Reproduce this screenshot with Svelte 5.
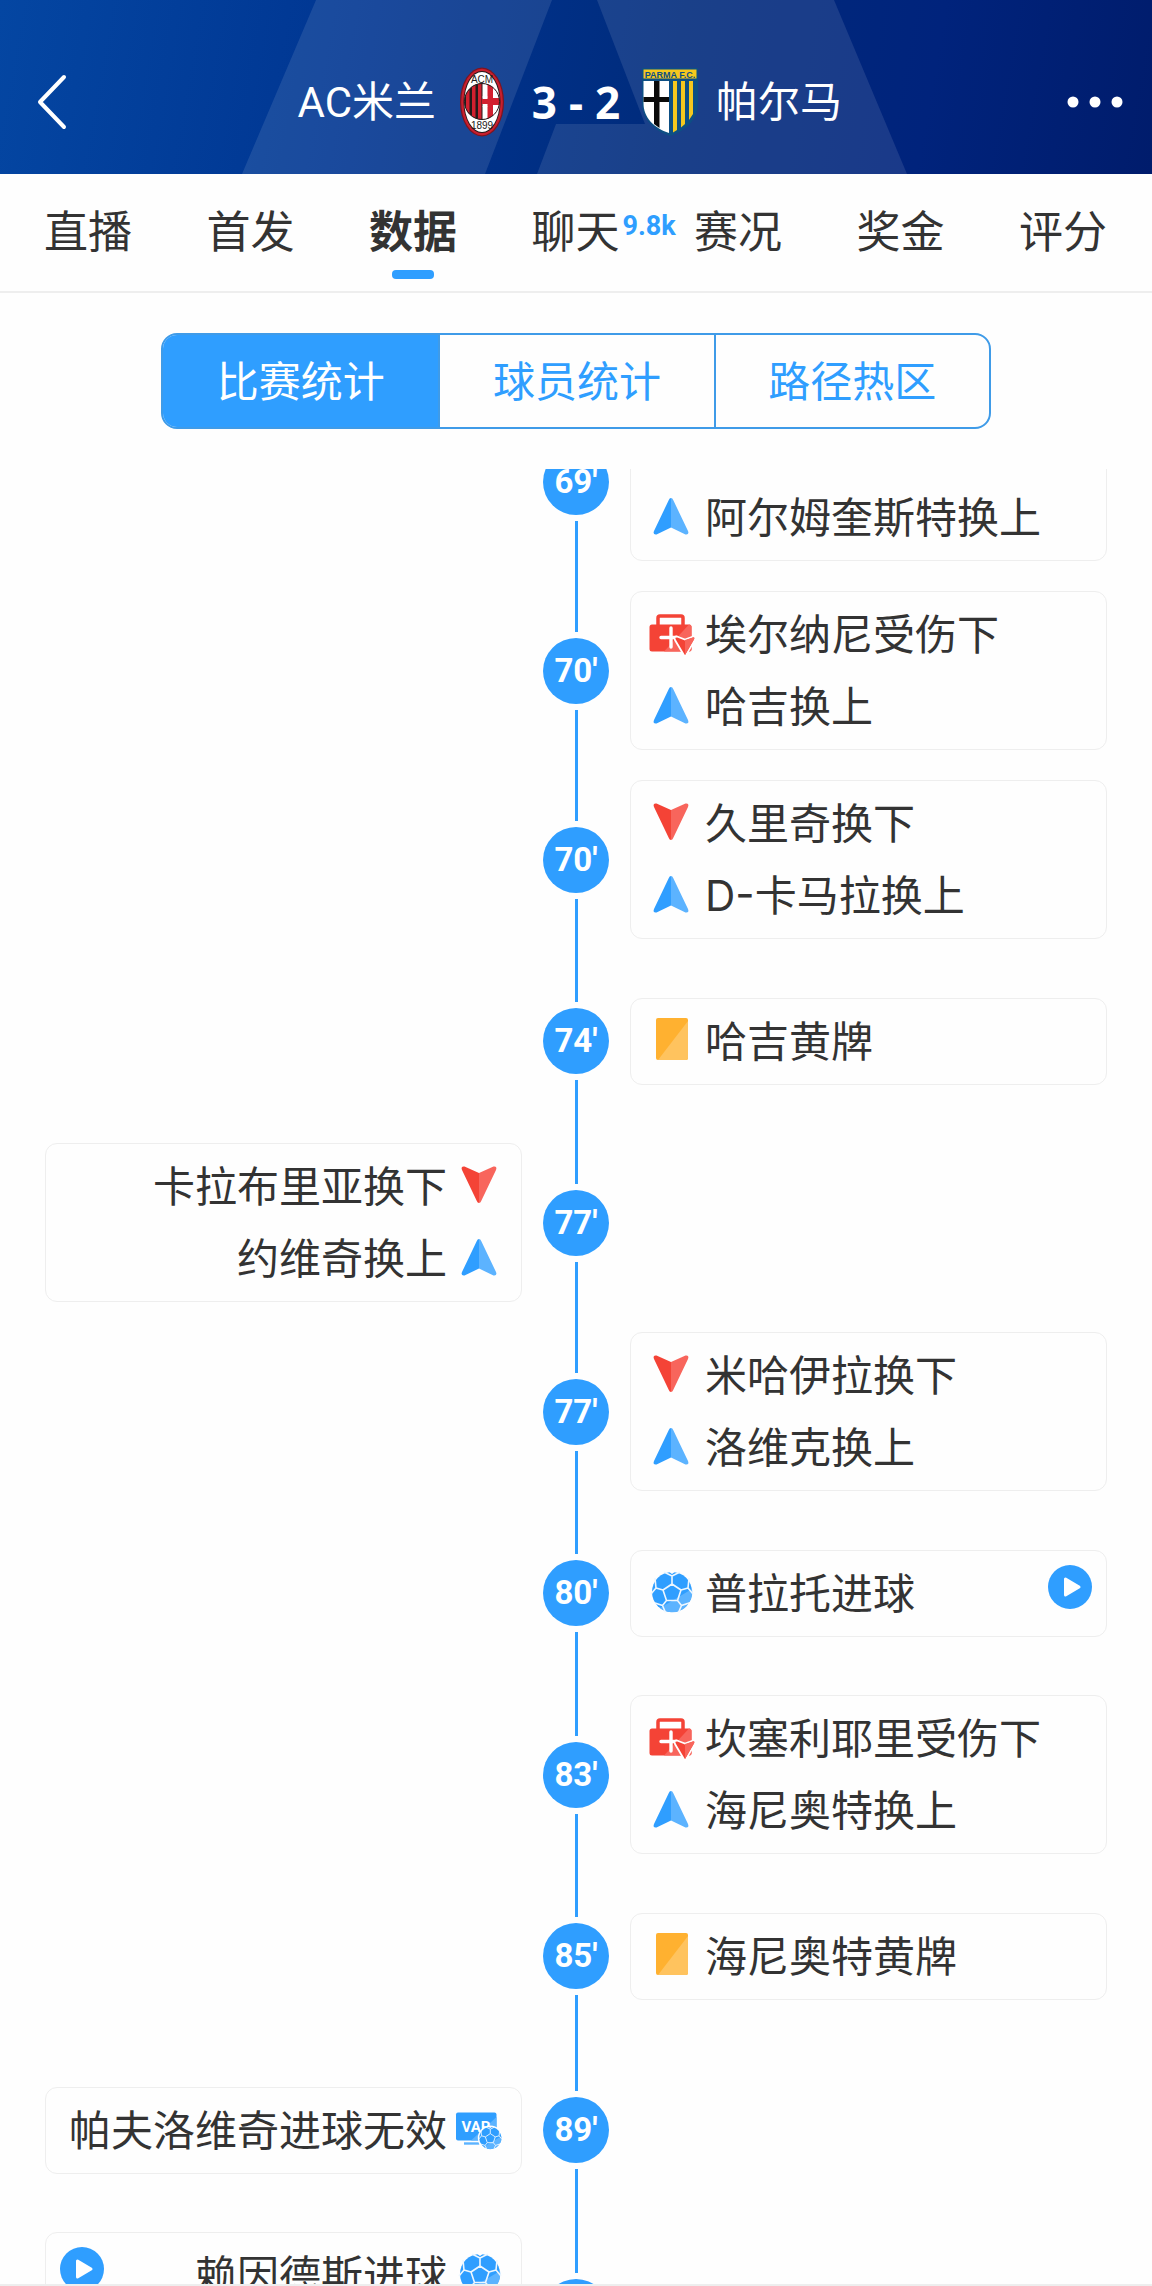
<script>
  const tabs = [
    { name: '直播' },
    { name: '首发' },
    { name: '数据', active: true },
    { name: '聊天', badge: '9.8k' },
    { name: '赛况' },
    { name: '奖金' },
    { name: '评分' }
  ];

  const views = ['比赛统计', '球员统计', '路径热区'];
  let view = $state(0);

  const rows = [
    { minute: '69′', side: 'right', tall: true, align: 'end', events: [['up', '阿尔姆奎斯特换上']] },
    { minute: '70′', side: 'right', events: [['injury', '埃尔纳尼受伤下'], ['up', '哈吉换上']] },
    { minute: '70′', side: 'right', events: [['down', '久里奇换下'], ['up', 'D-卡马拉换上']] },
    { minute: '74′', side: 'right', events: [['yellow', '哈吉黄牌']] },
    { minute: '77′', side: 'left', events: [['down', '卡拉布里亚换下'], ['up', '约维奇换上']] },
    { minute: '77′', side: 'right', events: [['down', '米哈伊拉换下'], ['up', '洛维克换上']] },
    { minute: '80′', side: 'right', video: true, events: [['goal', '普拉托进球']] },
    { minute: '83′', side: 'right', events: [['injury', '坎塞利耶里受伤下'], ['up', '海尼奥特换上']] },
    { minute: '85′', side: 'right', events: [['yellow', '海尼奥特黄牌']] },
    { minute: '89′', side: 'left', events: [['var', '帕夫洛维奇进球无效']] },
    { minute: '', side: 'left', tall: true, video: true, events: [['goal', '赖因德斯进球']] }
  ];
</script>

{#snippet ball()}
  <circle cx="27" cy="25" r="20" fill="#2f9eff" />
  <path d="M47 22A20 20 0 0 1 15 41Z" fill="#5cb3ff" />
  <path
    d="M27 17l9 6-3.500 10.500h-11L18 23zM27 17V9M27 9l-8-4M27 9l8-4M36 23l7-2M43 21l1-10M43 21l5 6M32.500 33.500l4 5M36.500 38.500l9-3M36.500 38.500l-3 7M21.500 33.500l-4 5M17.500 38.500l-9-3M17.500 38.500l3 7M18 23l-7-2M11 21l-1-10M11 21l-5 6"
    fill="none"
    stroke="#eef7ff"
    stroke-width="1.600"
    stroke-linejoin="round"
  />
  <path d="M23 4h8l-4 3zM8 33l5 8-6-3zM46 33l-5 8 6-3z" fill="#fff" />
{/snippet}

{#snippet icon(kind)}
  <svg class="icon" viewBox="0 0 52 52" aria-hidden="true">
    {#if kind === 'up'}
      <path d="M26 7q1.500 0 2.200 2L43 40q1.500 4-2.500 3.500L26 36.500Z" fill="#5cb3ff" />
      <path d="M26 7q-1.500 0-2.200 2L9 40q-1.500 4 2.500 3.500L26 36.500Z" fill="#2f9eff" />
    {:else if kind === 'down'}
      <path d="M26 43q1.500 0 2.200-2L43 10q1.500-4-2.500-3.500L26 13Z" fill="#f8655c" />
      <path d="M26 43q-1.500 0-2.200-2L9 10q-1.500-4 2.500-3.500L26 13Z" fill="#f44336" />
    {:else if kind === 'yellow'}
      <rect x="11" y="3" width="32" height="42" rx="2" fill="#ffb130" />
      <path d="M43 6v37q0 2-2 2H13Z" fill="#ffc35e" />
    {:else if kind === 'injury'}
      <path d="M13 17V10q0-2 2-2h21q2 0 2 2v7" fill="none" stroke="#f44336" stroke-width="3.500" />
      <rect x="4.500" y="16.500" width="42" height="27" rx="2.500" fill="#f44336" />
      <path d="M44 16.500q2.500 0 2.500 2.500v22q0 2.500-2.500 2.500H19Z" fill="#f8655c" />
      <path d="M16 29.500h16M26 20v19" stroke="#fff" stroke-width="3.400" stroke-linecap="round" />
      <path d="M32 28.500l8 3 8-3q3-.5 2 3L40 49 30 32q-1.500-3.500 2-3.500Z" fill="#f44336" stroke="#fff" stroke-width="1.800" />
      <path d="M40 32l8-2.500q2-.3 1 2L40 47Z" fill="#f8655c" />
    {:else if kind === 'goal'}
      {@render ball()}
    {:else if kind === 'var'}
      <rect x="3" y="8.500" width="40.500" height="28" rx="2" fill="#2f9eff" />
      <path d="M43.500 13v22q0 1.500-1.500 1.500H18Z" fill="#5cb3ff" />
      <path d="M11 39.500h17" stroke="#5cb3ff" stroke-width="2.400" />
      <text class="var" x="8.500" y="27.500">VAR</text>
      <circle cx="37.300" cy="34" r="12.500" fill="#fff" />
      <g transform="translate(22.450 20.250) scale(.55)">{@render ball()}</g>
    {/if}
  </svg>
{/snippet}

<div class="app">
  <header>
    <svg class="pattern" viewBox="0 0 1152 174" preserveAspectRatio="xMidYMid slice" aria-hidden="true">
      <path d="M316 0H552L485 174H242ZM597 0H834L907 174H537L556 124H645Z" fill="#fff" fill-opacity=".1" />
    </svg>
    <button class="nav back" aria-label="返回">
      <svg width="36" height="56" viewBox="0 0 36 56"><path d="M32 3 8 28 32 53" fill="none" stroke="#fff" stroke-width="4" stroke-linecap="round" stroke-linejoin="round" /></svg>
    </button>
    <div class="match">
      <div class="team home">
        <span>AC米兰</span>
        <svg width="68" height="70" viewBox="0 0 68 70" aria-hidden="true">
          <ellipse cx="34" cy="35" rx="22" ry="34.500" fill="#7e1420" />
          <ellipse cx="34" cy="35" rx="20.800" ry="33.300" fill="#c81f2e" />
          <ellipse cx="34" cy="35" rx="18.500" ry="31" fill="#231a1a" />
          <ellipse cx="34" cy="35" rx="17.600" ry="30" fill="#fff" />
          <clipPath id="disc"><ellipse cx="34" cy="34.500" rx="17.500" ry="18" /></clipPath>
          <g clip-path="url(#disc)">
            <path d="M16 16h19v37H16z" fill="#231a1a" />
            <path d="M18 16h3.500v37H18zM24 16h3.500v37H24zM30 16h3.500v37H30z" fill="#d2202f" />
            <path d="M35 16h18v37H35z" fill="#d2202f" />
            <path d="M34.500 16h5v14.500h-5zM34.500 39h5v15h-5z" fill="#fff" />
            <path d="M34.500 29.500h5v10h-5zM45 16h7v15h-7zM45 38h7v15h-7z" fill="#fff" />
            <path d="M34 32h18v5H34zM40 16h5v37h-5z" fill="#d2202f" />
          </g>
          <ellipse cx="34" cy="34.500" rx="17.500" ry="18" fill="none" stroke="#231a1a" stroke-width="1" />
          <text class="crest-small" x="34" y="15.500">ACM</text>
          <text class="crest-small" x="34" y="61.500">1899</text>
        </svg>
      </div>
      <div class="score"><span>3</span><span>-</span><span>2</span></div>
      <div class="team away">
        <svg width="68" height="70" viewBox="0 0 68 70" aria-hidden="true">
          <path d="M6 1h56v35c0 16-12 28-28 33C18 64 6 52 6 36Z" fill="#0d4f84" />
          <path d="M7.500 2.500h53v9h-53z" fill="#f5c81e" />
          <path d="M7.500 14H33v52C18 61 7.500 51 7.500 36Z" fill="#fff" />
          <path d="M18 14h5.500v47L18 57zM7.500 30H33v5H7.500z" fill="#0a0a0a" />
          <path d="M37 14h4v49l-4 2.500zM45 14h4v43l-4 3.500zM53 14h4v33l-4 6z" fill="#f5c81e" />
          <text class="crest-name" x="34" y="10.500">PARMA F.C.</text>
        </svg>
        <span>帕尔马</span>
      </div>
    </div>
    <button class="nav more" aria-label="更多">
      <svg width="58" height="12" viewBox="0 0 58 12"><g fill="#fff"><circle cx="7" cy="6" r="5.500" /><circle cx="29" cy="6" r="5.500" /><circle cx="51" cy="6" r="5.500" /></g></svg>
    </button>
  </header>

  <nav class="tabs">
    {#each tabs as tab}
      <button class="tab" class:active={tab.active}>
        {tab.name}
        {#if tab.badge}<span class="badge">{tab.badge}</span>{/if}
      </button>
    {/each}
  </nav>

  <div class="segments">
    {#each views as name, i}
      <button class:selected={view === i} onclick={() => (view = i)}>{name}</button>
    {/each}
  </div>

  <main>
    <ol>
      {#each rows as row}
        <li class={row.side}>
          <div class="axis">
            <i></i>
            <span class="minute">{row.minute}</span>
            <i></i>
          </div>
          <article class="card" class:tall={row.tall} class:end={row.align === 'end'}>
            <div class="events">
              {#each row.events as [kind, text]}
                <div class="event">
                  {@render icon(kind)}
                  <span>{text}</span>
                </div>
              {/each}
            </div>
            {#if row.video}
              <button class="play" aria-label="播放">
                <svg viewBox="0 0 44 44"><circle cx="22" cy="22" r="22" fill="#2f9eff" /><path d="M17.500 14v16L31 22Z" fill="#fff" stroke="#fff" stroke-width="3" stroke-linejoin="round" /></svg>
              </button>
            {/if}
          </article>
        </li>
      {/each}
    </ol>
  </main>
</div>

<style>
  :global(body) {
    margin: 0;
    background: #fefefe;
  }

  .app {
    display: flex;
    flex-direction: column;
    box-sizing: border-box;
    height: 100vh;
    border-bottom: 2px solid #eee;
    background: #fefefe;
    color: #333;
    font-family: Inter, 'Noto Sans CJK SC', sans-serif;
    font-size: 42px;
  }

  button {
    padding: 0;
    border: 0;
    background: none;
    color: inherit;
    font: inherit;
    cursor: pointer;
  }

  svg {
    display: block;
  }

  header {
    position: relative;
    display: flex;
    align-items: center;
    justify-content: space-between;
    box-sizing: border-box;
    height: 174px;
    flex: none;
    padding: 30px 28px 0 32px;
    background: linear-gradient(100deg, #0446a2 0%, #003591 32%, #002b7c 58%, #00237c 80%, #001c6c 100%);
    color: #fff;
    font-family: Roboto, 'Noto Sans CJK SC', sans-serif;
  }

  .pattern {
    position: absolute;
    inset: 0;
    width: 100%;
    height: 100%;
  }

  .nav {
    position: relative;
    display: flex;
    width: 60px;
  }

  .more {
    width: 64px;
    justify-content: flex-end;
  }

  .match {
    position: relative;
    display: grid;
    grid-template-columns: 1fr 120px 1fr;
    align-items: center;
    flex: 1;
    line-height: 60px;
  }

  .team {
    display: flex;
    align-items: center;
    gap: 12px;
  }

  .home {
    justify-content: flex-end;
  }

  .team span {
    padding-top: 2px;
  }

  .score {
    display: flex;
    justify-content: center;
    gap: 12px;
    font-family: 'Noto Sans', sans-serif;
    font-size: 44px;
    font-weight: 700;
  }

  .crest-small {
    fill: #231a1a;
    font: 10px 'Liberation Sans', sans-serif;
    text-anchor: middle;
  }

  .crest-name {
    fill: #0d4f84;
    font: 700 9px 'Liberation Sans', sans-serif;
    text-anchor: middle;
  }

  .tabs {
    display: flex;
    justify-content: space-between;
    flex: none;
    padding: 22px 45px 12px 44px;
    border-bottom: 2px solid #eee;
    font-size: 44px;
    line-height: 72px;
  }

  .tab {
    position: relative;
    display: flex;
    flex-direction: column;
    align-items: center;
    gap: 2px;
  }

  .tab::after {
    content: '';
    width: 42px;
    height: 9px;
    border-radius: 4px;
  }

  .tab.active {
    font-weight: 700;
  }

  .tab.active::after {
    background: #2f9eff;
  }

  .badge {
    position: absolute;
    top: 12px;
    left: 100%;
    padding-left: 3px;
    color: #2f9eff;
    font: 700 27px/36px Roboto, sans-serif;
  }

  .segments {
    display: grid;
    grid-template-columns: repeat(3, 1fr);
    flex: none;
    box-sizing: border-box;
    width: 72%;
    height: 96px;
    margin: 40px auto;
    overflow: hidden;
    border: 2px solid #3f9be8;
    border-radius: 16px;
    color: #2f9eff;
  }

  .segments button {
    padding-bottom: 5px;
  }

  .segments button + button {
    border-left: 2px solid #3f9be8;
  }

  .segments .selected {
    background: #2f9eff;
    color: #fff;
  }

  main {
    flex: 1;
    min-height: 0;
    overflow: hidden;
  }

  ol {
    margin: -82px 0 0;
    padding: 0 45px;
    list-style: none;
  }

  li {
    display: grid;
    grid-template-columns: 1fr 108px 1fr;
    align-items: center;
    min-height: 174px;
  }

  .axis {
    display: flex;
    flex-direction: column;
    align-items: center;
    align-self: stretch;
    grid-area: 1 / 2;
    gap: 6px;
  }

  .axis i {
    flex: 1;
    width: 3px;
    background: #2f9eff;
  }

  .minute {
    width: 66px;
    height: 66px;
    border-radius: 50%;
    background: #2f9eff;
    color: #fff;
    font: 700 33px/66px Roboto, sans-serif;
    text-align: center;
  }

  .card {
    display: flex;
    grid-area: 1 / 3;
    box-sizing: border-box;
    margin: 15px 0;
    padding: 6px 14px 7px;
    border: 1px solid #eee;
    border-radius: 12px;
  }

  .tall {
    min-height: 159px;
  }

  .end {
    align-items: flex-end;
  }

  .events {
    flex: 1;
  }

  .event {
    display: flex;
    align-items: center;
    gap: 8px;
    line-height: 70px;
    white-space: nowrap;
  }

  .event span {
    padding-top: 2px;
  }

  .icon {
    width: 52px;
    height: 52px;
    flex: none;
  }

  .var {
    fill: #fff;
    font: 700 15px Roboto, sans-serif;
  }

  .play {
    width: 44px;
    height: 44px;
    margin-top: 8px;
  }

  .left .card {
    grid-area: 1 / 1;
    flex-direction: row-reverse;
    padding-right: 16px;
  }

  .left .event {
    flex-direction: row-reverse;
    gap: 6px;
  }
</style>
